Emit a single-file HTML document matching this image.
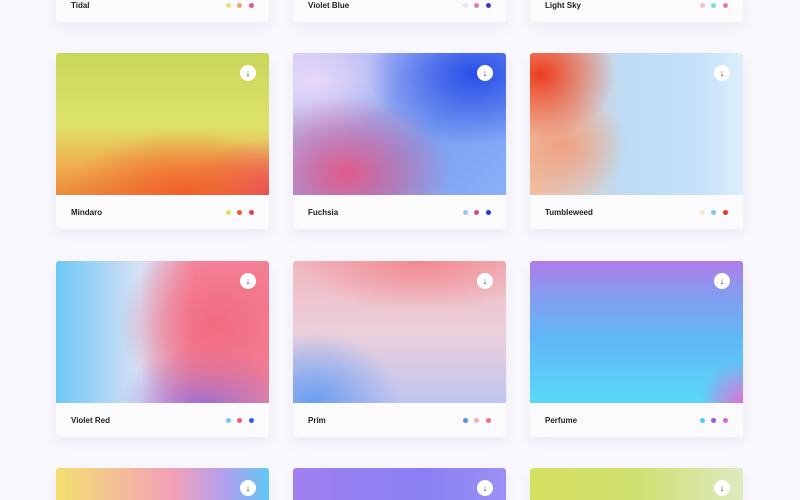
<!DOCTYPE html>
<html style="width:800px;height:500px;overflow:hidden"><head><style>
body{margin:0;width:800px;height:500px;background:#f9f8fd;overflow:hidden;position:relative;font-family:"Liberation Sans",sans-serif}
.c{position:absolute;width:213px;background:#fbfbfe;box-shadow:0 6px 14px rgba(60,50,110,0.07);border-radius:3px}
.im{height:142px;border-radius:3px 3px 0 0;position:relative;overflow:hidden}
.ft{height:34px;position:relative}
.n{position:absolute;left:15px;top:13px;font-size:8px;font-weight:bold;color:#222}
.d{position:absolute;top:15px;width:5px;height:5px;border-radius:50%}
.b{position:absolute;right:13px;top:12px;width:16px;height:16px;border-radius:50%;background:#fff;font-size:9px;line-height:16px;text-align:center;color:#333;font-weight:bold}
</style></head><body>
<div class="c" style="left:56px;top:-12px"><div class="ft"><div class="n">Tidal</div><div class="d" style="left:170px;background:#eae27a"></div><div class="d" style="left:181px;background:#eba766"></div><div class="d" style="left:193px;background:#e3598b"></div></div></div>
<div class="c" style="left:293px;top:-12px"><div class="ft"><div class="n">Violet Blue</div><div class="d" style="left:170px;background:#e9e4f3"></div><div class="d" style="left:181px;background:#d983b8"></div><div class="d" style="left:193px;background:#4b2fd0"></div></div></div>
<div class="c" style="left:530px;top:-12px"><div class="ft"><div class="n">Light Sky</div><div class="d" style="left:170px;background:#f5c0dd"></div><div class="d" style="left:181px;background:#6ee2d8"></div><div class="d" style="left:193px;background:#e67ca4"></div></div></div>

<div class="c" style="left:56px;top:53px"><div class="im" style="background:radial-gradient(ellipse 55% 45% at 60% 100%,#f0602a,rgba(240,96,42,0) 100%),radial-gradient(ellipse 40% 40% at 100% 100%,#e84a6a,rgba(232,74,106,0)),linear-gradient(180deg,#c8d65a 0%,#dde36a 50%,#f0b050 78%,#eb8a3a 100%)"><div class="b">↓</div></div><div class="ft"><div class="n">Mindaro</div><div class="d" style="left:170px;background:#dde05a"></div><div class="d" style="left:181px;background:#ee5a22"></div><div class="d" style="left:193px;background:#e83e5e"></div></div></div>
<div class="c" style="left:293px;top:53px"><div class="im" style="background:radial-gradient(ellipse 50% 55% at 25% 85%,#e05a8a,rgba(224,90,138,0)),radial-gradient(ellipse 50% 50% at 85% 15%,#2a4ee8,rgba(42,78,232,0)),radial-gradient(ellipse 40% 40% at 10% 20%,#e8d8f8,rgba(232,216,248,0)),linear-gradient(135deg,#d0c8f6,#7aa0f2 60%,#8ab0f8)"><div class="b">↓</div></div><div class="ft"><div class="n">Fuchsia</div><div class="d" style="left:170px;background:#9bc4f8"></div><div class="d" style="left:181px;background:#e04a7a"></div><div class="d" style="left:193px;background:#1a3ad8"></div></div></div>
<div class="c" style="left:530px;top:53px"><div class="im" style="background:radial-gradient(ellipse 35% 45% at 5% 15%,#ec3e20,rgba(236,62,32,0)),radial-gradient(ellipse 30% 40% at 15% 65%,#f0a080,rgba(240,160,128,0)),linear-gradient(90deg,#f2c0a0,#bcdcf6 45%,#c6e2fa 80%,#dceefa)"><div class="b">↓</div></div><div class="ft"><div class="n">Tumbleweed</div><div class="d" style="left:170px;background:#f3e6cc"></div><div class="d" style="left:181px;background:#86c6f2"></div><div class="d" style="left:193px;background:#e23a1a"></div></div></div>

<div class="c" style="left:56px;top:261px"><div class="im" style="background:radial-gradient(ellipse 45% 60% at 75% 45%,#f26a80,rgba(242,106,128,0)),radial-gradient(ellipse 40% 40% at 70% 100%,#9a70d8,rgba(154,112,216,0)),linear-gradient(90deg,#6cc8f4,#d8e0f4 40%,#f48aa0 65%,#f28298)"><div class="b">↓</div></div><div class="ft"><div class="n">Violet Red</div><div class="d" style="left:170px;background:#7cc6f6"></div><div class="d" style="left:181px;background:#ea5a80"></div><div class="d" style="left:193px;background:#3a5ae0"></div></div></div>
<div class="c" style="left:293px;top:261px"><div class="im" style="background:radial-gradient(ellipse 40% 50% at 10% 100%,#6a9ef0,rgba(106,158,240,0)),radial-gradient(ellipse 60% 35% at 60% 0%,#f28890,rgba(242,136,144,0)),linear-gradient(180deg,#f0b8c0,#ecd0dc 50%,#c0c4f0 100%)"><div class="b">↓</div></div><div class="ft"><div class="n">Prim</div><div class="d" style="left:170px;background:#5a8ce8"></div><div class="d" style="left:181px;background:#f2b0c0"></div><div class="d" style="left:193px;background:#f07080"></div></div></div>
<div class="c" style="left:530px;top:261px"><div class="im" style="background:radial-gradient(ellipse 20% 30% at 100% 100%,#e070d8,rgba(224,112,216,0)),linear-gradient(180deg,#b07ae8 0%,#8a98f0 20%,#60b8f6 55%,#5ad8f8 100%)"><div class="b">↓</div></div><div class="ft"><div class="n">Perfume</div><div class="d" style="left:170px;background:#4ed0f4"></div><div class="d" style="left:181px;background:#9a5ae0"></div><div class="d" style="left:193px;background:#e060d8"></div></div></div>

<div class="c" style="left:56px;top:468px"><div class="im" style="height:32px;background:linear-gradient(90deg,#f4e070,#f2a0b8 55%,#b0a0f0 80%,#60c8f4)"><div class="b">↓</div></div></div>
<div class="c" style="left:293px;top:468px"><div class="im" style="height:32px;background:linear-gradient(90deg,#a080f0,#8a80f4 60%,#9a90f4)"><div class="b">↓</div></div></div>
<div class="c" style="left:530px;top:468px"><div class="im" style="height:32px;background:linear-gradient(90deg,#d6e060,#d0e070 50%,#dceac0)"><div class="b">↓</div></div></div>
</body></html>
